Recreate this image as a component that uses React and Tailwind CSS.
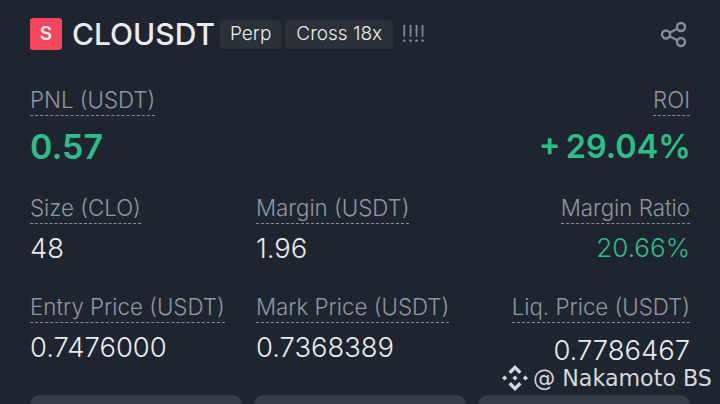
import React from "react";

const Label = ({ children }) => (
  <span className="inline-block border-b border-dashed border-[#848e9c] pb-[2px] text-[22.3px] font-light leading-[27px] text-[#92969f]">
    {children}
  </span>
);

const Stat = ({ label, value, right, green }) => (
  <div className={right ? "flex flex-col items-end" : "flex flex-col items-start"}>
    <Label>{label}</Label>
    <div className={`mt-[7px] font-light leading-[34px] ${green ? "text-[26px] text-[#2ebd85]" : "text-[27.4px] text-[#eaecef]"}`}>{value}</div>
  </div>
);

const App = () => {
  return (
    <div className="relative h-[404px] w-[720px] overflow-hidden bg-[#1e2530] px-[30px] pt-[18px] font-['Inter',sans-serif]">
      <div className="flex h-[32px] items-center">
        <div className="flex h-[32px] w-[32px] items-center justify-center rounded-[3px] bg-[#f6465d] text-[19px] font-semibold text-[#eaecef]">
          S
        </div>
        <div className="ml-[10px] text-[30px] font-medium leading-[32px] text-[#eaecef]">CLOUSDT</div>
        <div className="ml-[5px] flex h-[29px] items-center rounded-[3px] bg-[#2b3139] px-[10px] text-[19px] font-light text-[#eaecef]">Perp</div>
        <div className="ml-[4px] flex h-[29px] items-center rounded-[3px] bg-[#2b3139] px-[11px] text-[19px] font-light text-[#eaecef]">Cross 18x</div>
        <div className="ml-[8px] text-[23px] font-light tracking-[-0.4px] text-[#848e9c]">!!!!</div>
        <svg className="ml-auto mr-[2px]" width="28" height="28" viewBox="0 0 28 28" fill="none" stroke="#848e9c" strokeWidth="2.4">
          <circle cx="6" cy="14.5" r="4" />
          <circle cx="21" cy="7" r="4" />
          <circle cx="21" cy="22" r="4" />
          <path d="M9.6 12.7 17.4 8.8M9.6 16.3l7.8 3.9" />
        </svg>
      </div>

      <div className="mt-[36px] flex justify-between">
        <div className="flex flex-col items-start">
          <Label>PNL (USDT)</Label>
          <div className="mt-[10px] text-[34px] font-semibold leading-[42px] text-[#2ebd85]">0.57</div>
        </div>
        <div className="flex flex-col items-end">
          <Label>ROI</Label>
          <div className="mr-[-1px] mt-[10px] text-[32.5px] font-semibold leading-[42px] [word-spacing:-3px] text-[#2ebd85]">+ 29.04%</div>
        </div>
      </div>

      <div className="mt-[26px] grid grid-cols-[226px_1fr_1fr]">
        <Stat label="Size (CLO)" value="48" />
        <Stat label="Margin (USDT)" value="1.96" />
        <Stat label="Margin Ratio" value="20.66%" right green />
      </div>

      <div className="mt-[28px] grid grid-cols-[226px_1fr_1fr]">
        <Stat label="Entry Price (USDT)" value="0.7476000" />
        <Stat label="Mark Price (USDT)" value="0.7368389" />
        <div className="flex flex-col items-end">
          <Label>Liq. Price (USDT)</Label>
          <div className="mt-[10px] text-[27.4px] font-light leading-[34px] text-[#eaecef]">0.7786467</div>
        </div>
      </div>

      <div className="mt-[28px] grid grid-cols-3 gap-[12px]">
        <div className="h-[40px] rounded-[10px] bg-[#363c48]" />
        <div className="h-[40px] rounded-[10px] bg-[#363c48]" />
        <div className="h-[40px] rounded-[10px] bg-[#363c48]" />
      </div>

      <div className="absolute left-[501px] top-[363px] flex items-center font-['DejaVu_Sans',sans-serif] text-[22.2px] leading-[30px] text-[#d5d8dc]">
        <svg width="28" height="28" viewBox="0 0 28 28" fill="#d5d8dc">
          <path d="M14 1l6.5 6.5-2.4 2.4L14 5.8 9.9 9.9 7.5 7.5zM3.6 11.4 6.2 14l-2.6 2.6L1 14zM24.4 11.4 27 14l-2.6 2.6-2.6-2.6zM14 11.4l2.6 2.6-2.6 2.6-2.6-2.6zM7.5 20.5l2.4-2.4 4.1 4.1 4.1-4.1 2.4 2.4L14 27z" />
        </svg>
        <span className="ml-[4px]">@ Nakamoto BS</span>
      </div>
    </div>
  );
};

export default App;
